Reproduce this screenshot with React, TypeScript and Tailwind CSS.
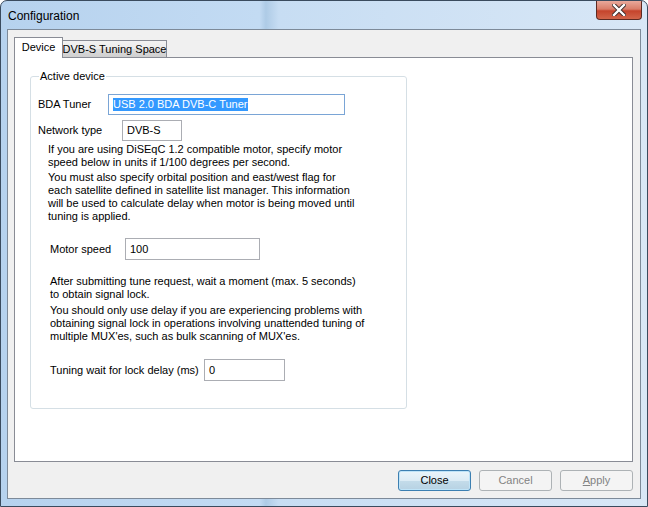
import React from "react";

const font = { fontFamily: '"Segoe UI", "Liberation Sans", Arial, sans-serif' };

function CloseGlyph() {
  return (
    <svg width="14" height="12" viewBox="0 0 14 12">
      <path
        d="M2 1 L12 11 M12 1 L2 11"
        stroke="#3a2a28"
        strokeWidth="4.2"
        strokeLinecap="square"
      />
      <path
        d="M2 1 L12 11 M12 1 L2 11"
        stroke="#ffffff"
        strokeWidth="2.4"
        strokeLinecap="square"
      />
    </svg>
  );
}

function TextBox({
  width,
  height = 21,
  value,
  focused = false,
  selected = false,
}: {
  width: string;
  height?: number;
  value: string;
  focused?: boolean;
  selected?: boolean;
}) {
  return (
    <div
      className={`${width} flex items-center whitespace-nowrap border bg-white pl-[4px] text-[11px] leading-[13px] text-black ${
        focused ? "border-[#7aa5d6]" : "border-[#abadb3]"
      } ${height === 22 ? "h-[22px]" : "h-[21px]"}`}
    >
      {selected ? <span className="bg-[#3399ff] text-white">{value}</span> : <span>{value}</span>}
    </div>
  );
}

export default function App() {
  return (
    <div
      className="flex h-[507px] w-[648px] flex-col overflow-hidden rounded-t-[7px] border border-[#3a4b5e] bg-[linear-gradient(90deg,#b6d2ee_0%,#c3dbf3_40%,#aecbe6_41%,#c7ddf3_43%,#d8e7f6_100%)] text-[11px] text-black"
      style={font}
    >
      {/* title bar */}
      <div className="flex h-[28px] shrink-0 items-start justify-between">
        <div className="pl-[7px] pt-[8px] text-[12px] leading-[15px] text-black">Configuration</div>
        <div className="mr-[5px] flex h-[19px] w-[46px] items-center justify-center rounded-b-[4px] border border-t-0 border-[#5d2a22] bg-[linear-gradient(180deg,#e9a99b_0%,#d97d69_45%,#c5442c_55%,#d2654a_100%)]">
          <CloseGlyph />
        </div>
      </div>

      {/* client area */}
      <div className="mx-[6px] mb-[7px] flex flex-1 flex-col border border-[#7d8a99] bg-[#f0f0f0] pl-[6px] pr-[7px] pt-[7px]">
        {/* tabs */}
        <div className="flex items-end whitespace-nowrap">
          <div className="relative z-10 -mb-px flex h-[21px] w-[49px] items-center justify-center border border-b-0 border-[#898c95] bg-white pb-[2px]">
            Device
          </div>
          <div className="flex h-[17px] w-[104px] items-center justify-center border border-b-0 border-l-0 border-[#898c95] bg-[linear-gradient(180deg,#f2f2f2_0%,#ebebeb_50%,#dddddd_51%,#cfcfcf_100%)] leading-[13px]">
            DVB-S Tuning Space
          </div>
        </div>

        {/* tab panel */}
        <div className="h-[405px] w-[619px] border border-[#898c95] bg-white pl-[15px] pt-[12px]">
          <fieldset className="h-[339px] w-[377px] rounded-[3px] border border-[#d5dfe5] px-[7px]">
            <legend className="ml-[1px] px-[1px] text-[11px] leading-[13px]">Active device</legend>

            <div className="mt-[11px] flex items-center whitespace-nowrap">
              <div className="w-[70px]">BDA Tuner</div>
              <TextBox width="w-[237px]" value="USB 2.0 BDA DVB-C Tuner" focused selected />
            </div>

            <div className="mt-[5px] flex items-center whitespace-nowrap">
              <div className="w-[84px]">Network type</div>
              <TextBox width="w-[60px]" value="DVB-S" />
            </div>

            <div className="pl-[10px] leading-[13px]">
              <p className="mt-[2px] whitespace-nowrap">
                If you are using DiSEqC 1.2 compatible motor, specify motor
                <br />
                speed below in units if 1/100 degrees per second.
              </p>
              <p className="mt-[2px] whitespace-nowrap">
                You must also specify orbital position and east/west flag for
                <br />
                each satellite defined in satellite list manager. This information
                <br />
                will be used to calculate delay when motor is being moved until
                <br />
                tuning is applied.
              </p>
            </div>

            <div className="mt-[15px] flex items-center whitespace-nowrap pl-[12px]">
              <div className="w-[75px]">Motor speed</div>
              <TextBox width="w-[135px]" height={22} value="100" />
            </div>

            <div className="pl-[12px] leading-[13px]">
              <p className="mt-[15px] whitespace-nowrap">
                After submitting tune request, wait a moment (max. 5 seconds)
                <br />
                to obtain signal lock.
              </p>
              <p className="mt-[3px] whitespace-nowrap">
                You should only use delay if you are experiencing problems with
                <br />
                obtaining signal lock in operations involving unattended tuning of
                <br />
                multiple MUX&apos;es, such as bulk scanning of MUX&apos;es.
              </p>
            </div>

            <div className="mt-[16px] flex items-center whitespace-nowrap pl-[12px]">
              <div className="w-[154px]">Tuning wait for lock delay (ms)</div>
              <TextBox width="w-[81px]" height={22} value="0" />
            </div>
          </fieldset>
        </div>

        {/* buttons */}
        <div className="mt-[8px] flex justify-end gap-[8px] whitespace-nowrap">
          <div className="flex h-[21px] w-[73px] items-center justify-center rounded-[3px] border border-[#3c7fb1] bg-[linear-gradient(180deg,#eaf5fb_0%,#dcecf5_50%,#c4dcea_51%,#b7d2e3_100%)] shadow-[inset_0_0_0_1px_#bfe4f8]">
            Close
          </div>
          <div className="flex h-[21px] w-[73px] items-center justify-center rounded-[3px] border border-[#adb2b5] bg-[#f4f4f4] text-[#838383]">
            Cancel
          </div>
          <div className="flex h-[21px] w-[73px] items-center justify-center rounded-[3px] border border-[#adb2b5] bg-[#f4f4f4] text-[#838383]">
            <span>
              <span className="underline">A</span>pply
            </span>
          </div>
        </div>
      </div>
    </div>
  );
}
